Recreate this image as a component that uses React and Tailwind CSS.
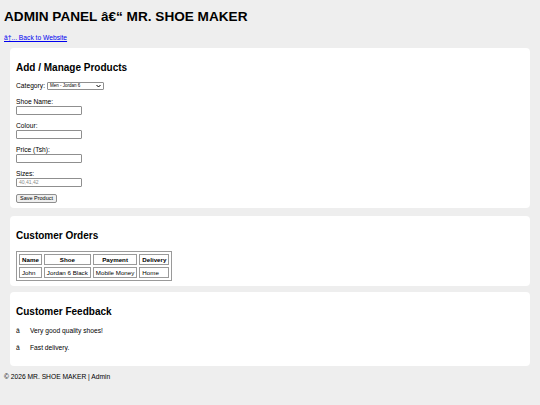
import React from 'react';

const Field = ({ label, placeholder, last }) => (
  <div className={last ? 'mb-[7px]' : 'mb-[6px]'}>
    <div className="text-[6.7px] leading-[9px] text-black">{label}</div>
    <div className="w-[66px] h-[9px] border border-[#8f8f8f] rounded-[1px] bg-white px-[2px] text-[5px] leading-[7px] text-[#8a8a8a]">
      {placeholder}
    </div>
  </div>
);

const Card = ({ title, children, className = '' }) => (
  <div className={`mx-[10px] bg-white rounded-[4px] px-[6px] ${className}`}>
    <h2 className="pt-[14px] text-[10px] leading-[12px] font-bold text-black">{title}</h2>
    {children}
  </div>
);

const orders = [{ name: 'John', shoe: 'Jordan 6 Black', payment: 'Mobile Money', delivery: 'Home' }];
const feedback = ['Very good quality shoes!', 'Fast delivery.'];

const App = () => {
  return (
    <div className="w-[540px] h-[405px] bg-[#eeeeee] font-['Liberation_Sans',Arial,sans-serif] text-black overflow-hidden">
      <h1 className="pl-[4px] pt-[9px] text-[13.6px] leading-[16px] font-bold">ADMIN PANEL â€“ MR. SHOE MAKER</h1>
      <a href="#" className="block pl-[4px] mt-[8px] text-[6.7px] leading-[9px] text-[#0000ee] underline">â†... Back to Website</a>

      <Card title="Add / Manage Products" className="mt-[6px] h-[160px]">
        <div className="mt-[7px] h-[10px] flex items-center gap-[2px] text-[6.7px] leading-[10px]">
          <span>Category:</span>
          <div className="w-[57px] h-[8px] border border-[#8f8f8f] rounded-[1px] flex items-center justify-between px-[2px] text-[4.5px] leading-[6px]">
            <span>Men - Jordan 6</span>
            <svg width="5" height="4" viewBox="0 0 10 8" fill="none" stroke="#000" strokeWidth="2">
              <path d="M1 2l4 4 4-4" />
            </svg>
          </div>
        </div>
        <div className="mt-[6px]">
          <Field label="Shoe Name:" />
          <Field label="Colour:" />
          <Field label="Price (Tsh):" />
          <Field label="Sizes:" placeholder="40,41,42" last />
        </div>
        <button className="block h-[9px] px-[3px] border border-[#8f8f8f] rounded-[2px] bg-[#efefef] text-[5.5px] leading-[7px] text-black">
          Save Product
        </button>
      </Card>

      <Card title="Customer Orders" className="mt-[8px] h-[70px]">
        <table className="mt-[9px] border border-[#9a9a9a] border-separate border-spacing-[2px] text-[6.2px] leading-[8px]">
          <thead>
            <tr>
              <th className="border border-[#9a9a9a] px-[2px] h-[11px] font-bold">Name</th>
              <th className="border border-[#9a9a9a] px-[2px] font-bold">Shoe</th>
              <th className="border border-[#9a9a9a] px-[2px] font-bold">Payment</th>
              <th className="border border-[#9a9a9a] px-[2px] font-bold">Delivery</th>
            </tr>
          </thead>
          <tbody>
            {orders.map((o) => (
              <tr key={o.name}>
                <td className="border border-[#9a9a9a] px-[2px] h-[11px]">{o.name}</td>
                <td className="border border-[#9a9a9a] px-[2px]">{o.shoe}</td>
                <td className="border border-[#9a9a9a] px-[2px]">{o.payment}</td>
                <td className="border border-[#9a9a9a] px-[2px]">{o.delivery}</td>
              </tr>
            ))}
          </tbody>
        </table>
      </Card>

      <Card title="Customer Feedback" className="mt-[6px] h-[74px]">
        <ul className="mt-[8px] text-[6.7px] leading-[9px]">
          {feedback.map((f) => (
            <li key={f} className="flex mb-[8px]">
              <span className="w-[14px]">â</span>
              <span>{f}</span>
            </li>
          ))}
        </ul>
      </Card>

      <div className="pl-[4px] mt-[6px] text-[6.7px] leading-[9px]">© 2026 MR. SHOE MAKER | Admin</div>
    </div>
  );
};

export default App;
